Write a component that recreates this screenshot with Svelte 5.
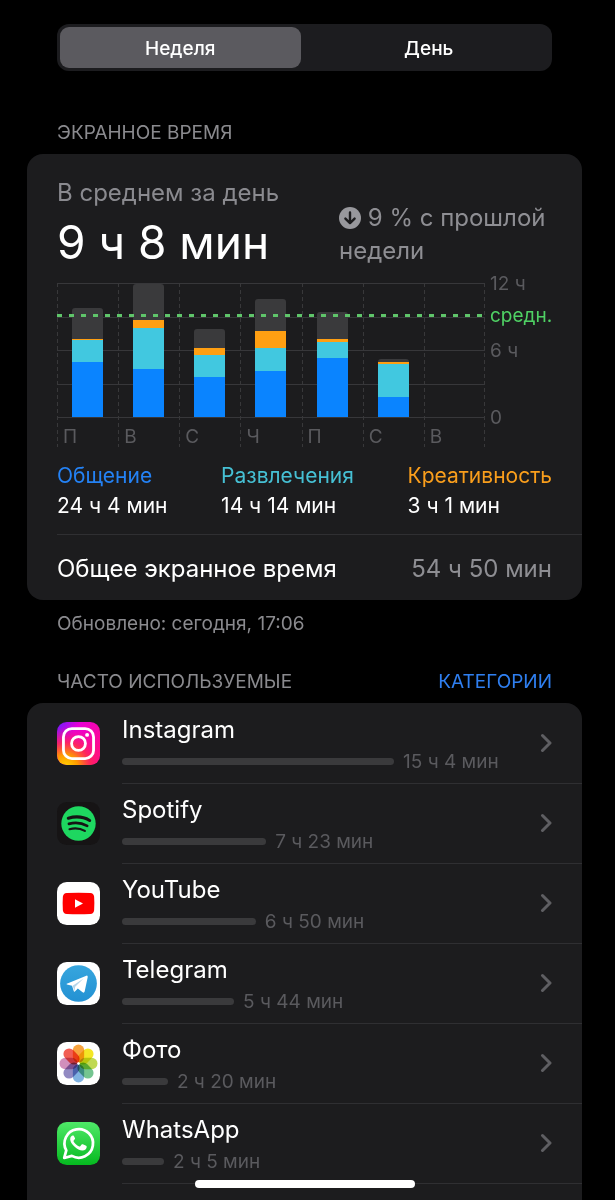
<script>
  const MAX_MINUTES = 720;
  const AVERAGE_MINUTES = 548;

  const days = [
    { label: 'П', social: 295, fun: 118, creative: 6, other: 167 },
    { label: 'В', social: 258, fun: 218, creative: 43, other: 195 },
    { label: 'С', social: 215, fun: 118, creative: 38, other: 102 },
    { label: 'Ч', social: 247, fun: 124, creative: 91, other: 172 },
    { label: 'П', social: 317, fun: 86, creative: 16, other: 145 },
    { label: 'С', social: 107, fun: 180, creative: 6, other: 18 },
    { label: 'В', social: 0, fun: 0, creative: 0, other: 0 }
  ];
  const segments = ['other', 'creative', 'fun', 'social'];

  const ticks = [
    { text: '12 ч', at: 720 },
    { text: 'средн.', at: AVERAGE_MINUTES, average: true },
    { text: '6 ч', at: 360 },
    { text: '0', at: 0 }
  ];

  const legend = [
    { name: 'Общение', time: '24 ч 4 мин', kind: 'social' },
    { name: 'Развлечения', time: '14 ч 14 мин', kind: 'fun' },
    { name: 'Креативность', time: '3 ч 1 мин', kind: 'creative' }
  ];

  const apps = [
    { id: 'instagram', name: 'Instagram', time: '15 ч 4 мин', share: 68.7 },
    { id: 'spotify', name: 'Spotify', time: '7 ч 23 мин', share: 36.4 },
    { id: 'youtube', name: 'YouTube', time: '6 ч 50 мин', share: 33.8 },
    { id: 'telegram', name: 'Telegram', time: '5 ч 44 мин', share: 28.3 },
    { id: 'photos', name: 'Фото', time: '2 ч 20 мин', share: 11.6 },
    { id: 'whatsapp', name: 'WhatsApp', time: '2 ч 5 мин', share: 10.6 }
  ];

  const petals = ['#f7941d', '#f2e300', '#b5d334', '#5dbb7d', '#6aa5dc', '#7f75b8', '#c97bb0', '#ef4136'];

  let period = $state('week');
  const pct = (minutes) => (minutes / MAX_MINUTES) * 100;
</script>

<main>
  <div class="switch" role="group" aria-label="Период">
    <button type="button" aria-pressed={period === 'week'} onclick={() => (period = 'week')}>Неделя</button>
    <button type="button" aria-pressed={period === 'day'} onclick={() => (period = 'day')}>День</button>
  </div>

  <header class="section first">
    <h2>Экранное время</h2>
  </header>

  <section class="card">
    <div class="summary">
      <div class="average">
        <p class="caption">В среднем за день</p>
        <p class="big">9 ч 8 мин</p>
      </div>
      <p class="change">
        <svg viewBox="0 0 22 22" aria-hidden="true">
          <circle cx="11" cy="11" r="11" fill="#98989d" />
          <path d="M11 5.500v10.500M6.400 11.600l4.600 4.600 4.600-4.600" fill="none" stroke="#1c1c1e" stroke-width="2.400" stroke-linecap="round" stroke-linejoin="round" />
        </svg>
        9 % с прошлой недели
      </p>
    </div>

    <div class="chart">
      <div class="plot">
        <div class="lines"><i></i><i></i><i></i><i></i></div>
        <div class="days">
          {#each days as day}
            <div class="day">
              <div class="track">
                <div class="bar">
                  {#each segments as kind}
                    <span class="seg {kind}" style="height: {pct(day[kind])}%"></span>
                  {/each}
                </div>
              </div>
              <span class="letter">{day.label}</span>
            </div>
          {/each}
        </div>
        <div class="levels">
          <span class="mean" style="bottom: {pct(AVERAGE_MINUTES)}%"></span>
        </div>
      </div>
      <div class="scale">
        {#each ticks as tick}
          <span class:mid={tick.average} style="bottom: {pct(tick.at)}%">{tick.text}</span>
        {/each}
      </div>
    </div>

    <dl class="legend">
      {#each legend as item}
        <div>
          <dt class={item.kind}>{item.name}</dt>
          <dd>{item.time}</dd>
        </div>
      {/each}
    </dl>

    <div class="total">
      <span>Общее экранное время</span>
      <span class="muted">54 ч 50 мин</span>
    </div>
  </section>

  <p class="updated">Обновлено: сегодня, 17:06</p>

  <header class="section">
    <h2>Часто используемые</h2>
    <button type="button" class="link">Категории</button>
  </header>

  <ul class="card apps">
    {#each apps as app}
      <li>
        <a href="#{app.id}">
          <svg class="icon" viewBox="0 0 44 44" aria-hidden="true">
            {#if app.id === 'instagram'}
              <defs>
                <linearGradient id="ig-base" x1="0" y1="0" x2="1" y2="0.6">
                  <stop offset="0" stop-color="#6a1cff" />
                  <stop offset="0.4" stop-color="#e800d8" />
                  <stop offset="1" stop-color="#ff0a8c" />
                </linearGradient>
                <radialGradient id="ig-warm" cx="0.2" cy="1.05" r="0.95">
                  <stop offset="0" stop-color="#ffd600" />
                  <stop offset="0.3" stop-color="#ff9a00" />
                  <stop offset="0.6" stop-color="#ff2a50" stop-opacity="0.85" />
                  <stop offset="1" stop-color="#ff0a8c" stop-opacity="0" />
                </radialGradient>
              </defs>
              <rect width="44" height="44" rx="10" fill="url(#ig-base)" />
              <rect width="44" height="44" rx="10" fill="url(#ig-warm)" />
              <rect x="6.6" y="6.8" width="30.8" height="30.6" rx="8.6" fill="none" stroke="#fff" stroke-width="2.9" />
              <circle cx="22" cy="22" r="7.1" fill="none" stroke="#fff" stroke-width="2.9" />
              <circle cx="30.8" cy="13.2" r="2" fill="#fff" />
            {:else if app.id === 'spotify'}
              <rect width="44" height="44" rx="10" fill="#161415" />
              <circle cx="22" cy="22" r="17.6" fill="#1ed760" />
              <g fill="none" stroke="#161415" stroke-linecap="round">
                <path d="M11.6 16.6c7.2-2.1 15.600-1.400 21.800 2.300" stroke-width="3.200" />
                <path d="M12.200 22.400c6.300-1.800 13.200-1 18.700 2.100" stroke-width="2.700" />
                <path d="M12.800 27.800c5.400-1.500 11-.9 15.700 1.800" stroke-width="2.200" />
              </g>
            {:else if app.id === 'youtube'}
              <rect width="44" height="44" rx="10" fill="#fff" />
              <path d="M10 11.200q12-.6 24 0 3.600.3 4 4 .5 6.600 0 13.600-.4 3.700-4 4-12 .6-24 0-3.600-.3-4-4-.5-6.600 0-13.600.4-3.700 4-4z" fill="#f00" />
              <path d="M18.400 17.600v8.800l8.200-4.400z" fill="#fff" />
            {:else if app.id === 'telegram'}
              <defs>
                <linearGradient id="tg" x1="0" y1="0" x2="0" y2="1">
                  <stop offset="0" stop-color="#37a6de" />
                  <stop offset="1" stop-color="#2391d3" />
                </linearGradient>
              </defs>
              <rect width="44" height="44" rx="10" fill="#fff" />
              <circle cx="22" cy="22" r="18.800" fill="url(#tg)" />
              <path d="M10 22.200 30 14q1.700-.5 1.400 1.500L28.300 30.200q-.5 1.800-2.100.8l-4.900-3.800-3 2.900q-.9.700-1.200-.5l-1.700-5.300-5.200-1.400q-.9-.3-.2-.700z" fill="#fff" />
              <path d="M16 24.200 27.200 17 18.600 25.200 17.900 29.600z" fill="#b5d5ea" />
            {:else if app.id === 'photos'}
              <rect width="44" height="44" rx="10" fill="#fff" />
              <g style="isolation: isolate">
                {#each petals as color, i}
                  <rect class="petal" x="16.200" y="2.600" width="11.600" height="18.600" rx="5.800" fill={color} transform="rotate({i * 45} 22 22)" />
                {/each}
              </g>
              <circle cx="22" cy="22" r="1.300" fill="#fff" />
            {:else}
              <defs>
                <linearGradient id="wa" x1="0" y1="0" x2="0" y2="1">
                  <stop offset="0" stop-color="#4fe968" />
                  <stop offset="1" stop-color="#05b91f" />
                </linearGradient>
              </defs>
              <rect width="44" height="44" rx="10" fill="url(#wa)" />
              <path d="M7.400 36.800 9.500 29A14.600 14.600 0 1 1 15.200 34.700z" fill="none" stroke="#fff" stroke-width="2.800" stroke-linejoin="round" />
              <path d="M17.400 14.600c-.4-.8-.8-.8-1.300-.8-.9 0-2.600 1.200-2.600 3.800 0 2.500 1.800 5 4.300 7.400 2.700 2.600 5.700 4.100 8.200 4.100 2.700 0 4.300-1.700 4.400-3.600 0-.6-.1-.8-.6-1.100l-3.300-1.600c-.6-.2-.9-.2-1.300.3l-1.400 1.700c-.3.300-.6.400-1.100.2-2.700-1.100-4.500-2.800-5.700-5-.2-.5-.1-.8.100-1.100l1.200-1.500c.2-.4.2-.7 0-1.100z" fill="#fff" />
            {/if}
          </svg>
          <span class="body">
            <span class="name">{app.name}</span>
            <span class="usage">
              <span class="meter" style="width: {app.share}%"></span>
              <span class="time">{app.time}</span>
            </span>
          </span>
          <svg class="chevron" viewBox="0 0 12 20" aria-hidden="true">
            <path d="M2.500 2.500l7.500 7.500-7.500 7.500" fill="none" stroke="#5e5e62" stroke-width="3" stroke-linecap="round" stroke-linejoin="round" />
          </svg>
        </a>
      </li>
    {/each}
  </ul>

  <div class="home"></div>
</main>

<style>
  :global(body) {
    margin: 0;
    background: #000;
  }

  main {
    box-sizing: border-box;
    min-height: 100vh;
    padding: 24px 33px 0 27px;
    display: flex;
    flex-direction: column;
    color: #fff;
    font-family: Inter, 'Noto Sans', sans-serif;
    font-size: 24px;
    line-height: 30px;
  }

  h2, p, ul, dl, dd { margin: 0; padding: 0; }

  button {
    border: 0;
    padding: 0;
    background: none;
    color: inherit;
    font: inherit;
  }

  .switch {
    display: grid;
    grid-template-columns: 1fr 1fr;
    gap: 8px;
    margin: 0 30px;
    padding: 3px;
    border-radius: 12px;
    background: #1c1c1f;
  }

  .switch button {
    height: 41px;
    padding-top: 2px;
    border-radius: 9px;
    font-size: 19px;
    font-weight: 500;
  }

  .switch button[aria-pressed='true'] { background: #5b5a5f; }

  .section {
    display: flex;
    justify-content: space-between;
    margin: 34px 30px 9px;
    font-size: 19px;
    line-height: 24px;
    text-transform: uppercase;
  }

  .section.first { margin-top: 50px; }

  h2 {
    color: #8a8a8e;
    font-size: inherit;
    font-weight: 400;
  }

  .link {
    color: #2f7ff0;
    text-transform: inherit;
  }

  .card {
    border-radius: 16px;
    background: #1c1c1e;
  }

  .summary {
    display: flex;
    justify-content: space-between;
    padding: 24px 30px 0;
  }

  .caption {
    color: #8a8a8f;
    line-height: 30px;
  }

  .big {
    margin-top: 4px;
    font-size: 46px;
    line-height: 60px;
  }

  .change {
    width: 213px;
    margin-top: 23px;
    color: #8e8e93;
    line-height: 33px;
  }

  .change svg {
    width: 22px;
    height: 22px;
    vertical-align: -3px;
  }

  .chart {
    display: flex;
    margin: 11px 30px 0;
  }

  .plot,
  .day {
    background: repeating-linear-gradient(#38383a 0 4px, transparent 4px 7px) no-repeat;
    background-size: 1px 100%;
  }

  .plot {
    flex: 1;
    display: grid;
    background-position: right top;
  }

  .plot > * { grid-area: 1 / 1; }

  .lines {
    height: 134px;
    display: grid;
    border-bottom: 1px solid #37373a;
  }

  .lines i { border-top: 1px solid #37373a; }

  .days {
    display: grid;
    grid-template-columns: repeat(7, 1fr);
  }

  .track {
    height: 134px;
    display: flex;
    justify-content: center;
  }

  .bar {
    width: 31px;
    display: flex;
    flex-direction: column;
    justify-content: flex-end;
  }

  .seg.other { border-radius: 3px 3px 0 0; background: #3a3a3c; }
  .seg.creative { background: #ff9f12; }
  .seg.fun { background: #41c8e0; }
  .seg.social { background: #0a84ff; }

  .letter {
    display: block;
    padding: 10px 0 0 6px;
    color: #5a5a5e;
    font-size: 19px;
    line-height: 20px;
  }

  .levels {
    position: relative;
    height: 134px;
  }

  .mean {
    position: absolute;
    left: 0;
    right: 0;
    height: 3px;
    margin-bottom: -2px;
    background: repeating-linear-gradient(90deg, #5fc56a 0 5px, transparent 5px 12px);
  }

  .scale {
    position: relative;
    width: 67px;
    height: 134px;
    color: #5a5a5e;
    font-size: 19px;
    line-height: 24px;
  }

  .scale span {
    position: absolute;
    left: 5px;
    margin-bottom: -13px;
  }

  .scale .mid { color: #4fd164; }

  .legend {
    display: flex;
    justify-content: space-between;
    margin: 14px 0 0 30px;
    padding: 0 30px 13px 0;
    border-bottom: 1px solid #2f2f32;
    font-size: 21px;
  }

  dt.social { color: #2482f5; }
  dt.fun { color: #46c0d4; }
  dt.creative { color: #f99e1c; }

  .total {
    display: flex;
    justify-content: space-between;
    padding: 19px 30px 16px;
  }

  .muted { color: #8e8e93; }

  .updated {
    margin: 12px 30px 0;
    color: #8a8a8e;
    font-size: 19px;
    line-height: 24px;
  }

  .apps {
    flex: 1;
    border-radius: 16px 16px 0 0;
    list-style: none;
  }

  .apps a {
    position: relative;
    height: 80px;
    display: flex;
    align-items: center;
    gap: 22px;
    padding: 0 30px;
    color: inherit;
    text-decoration: none;
  }

  .apps a::after {
    content: '';
    position: absolute;
    left: 95px;
    right: 0;
    bottom: -1px;
    height: 1px;
    background: #2f2f32;
  }

  .icon {
    flex: none;
    width: 43px;
    height: 43px;
  }

  .petal { mix-blend-mode: multiply; opacity: 0.85; }

  .body {
    flex: 1;
    padding-top: 5px;
  }

  .name {
    display: block;
    line-height: 32px;
  }

  .usage {
    display: flex;
    align-items: center;
    gap: 9px;
    line-height: 32px;
  }

  .meter {
    height: 7px;
    border-radius: 4px;
    background: #3a3a3c;
  }

  .time {
    color: #5a5a5e;
    font-size: 19px;
    white-space: nowrap;
  }

  .chevron {
    flex: none;
    width: 12px;
    height: 20px;
  }

  .home {
    position: fixed;
    left: 27px;
    right: 33px;
    bottom: 12px;
    width: 220px;
    height: 8px;
    margin: 0 auto;
    border-radius: 4px;
    background: #fff;
  }
</style>
